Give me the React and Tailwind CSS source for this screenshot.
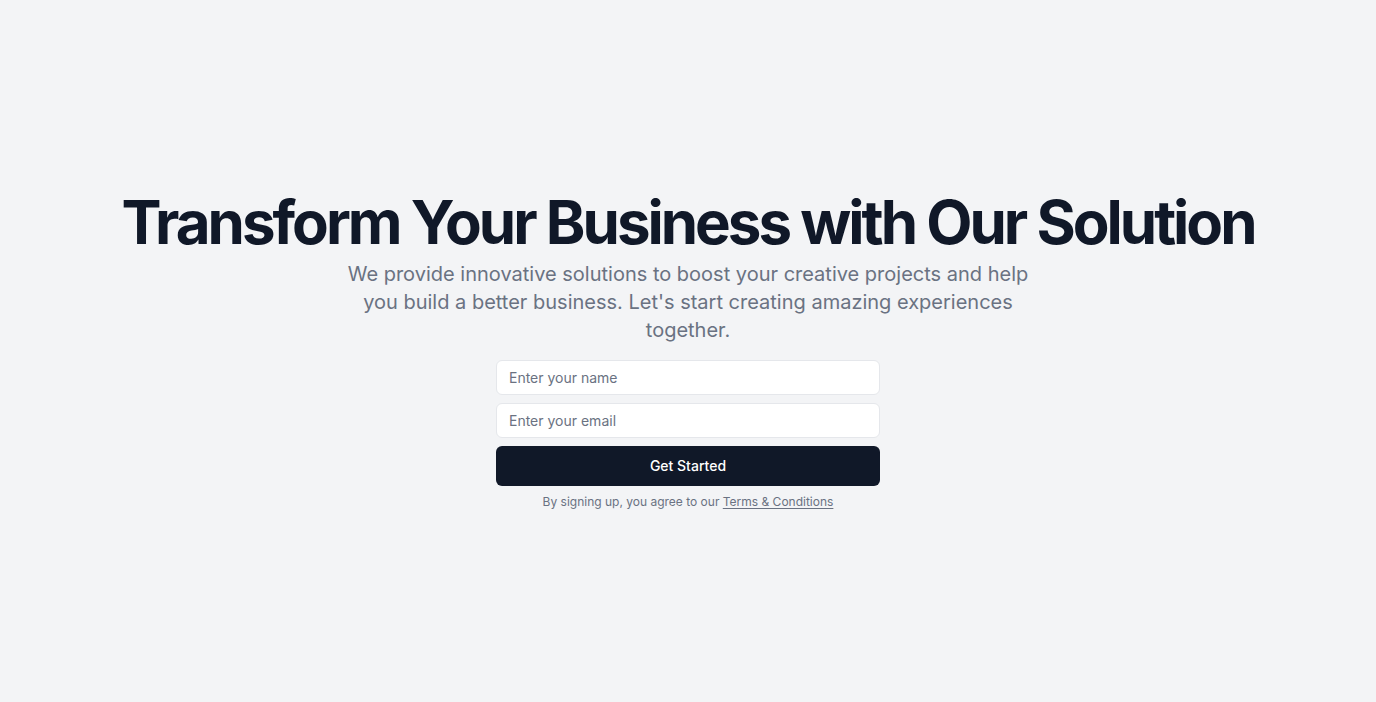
export default function App() {
  return (
    <div
      className="flex min-h-screen w-full items-center justify-center bg-gray-100 px-4"
      style={{ fontFamily: "Inter, 'Noto Sans', sans-serif" }}
    >
      <div className="flex flex-col items-center gap-4 text-center">
        <div className="space-y-2">
          <h1 className="text-6xl leading-none font-bold tracking-tighter text-gray-900">
            Transform Your Business with Our Solution
          </h1>
          <p className="mx-auto max-w-[700px] text-xl leading-7 text-gray-500">
            We provide innovative solutions to boost your creative projects and help you build a better business. Let's start creating amazing experiences together.
          </p>
        </div>
        <div className="w-full max-w-sm space-y-2">
          <form className="flex flex-col gap-2" onSubmit={(e) => e.preventDefault()}>
            <input
              className="h-[35px] w-full rounded-md border border-gray-200 bg-white px-3 text-sm text-gray-900 placeholder:text-gray-500 outline-none"
              placeholder="Enter your name"
              type="text"
            />
            <input
              className="h-[35px] w-full rounded-md border border-gray-200 bg-white px-3 text-sm text-gray-900 placeholder:text-gray-500 outline-none"
              placeholder="Enter your email"
              type="email"
            />
            <button
              type="submit"
              className="h-10 w-full rounded-md bg-gray-900 text-sm font-medium text-white"
            >
              Get Started
            </button>
          </form>
          <p className="text-xs text-gray-500">
            By signing up, you agree to our{" "}
            <a className="underline underline-offset-2" href="#">
              Terms &amp; Conditions
            </a>
          </p>
        </div>
      </div>
    </div>
  );
}
